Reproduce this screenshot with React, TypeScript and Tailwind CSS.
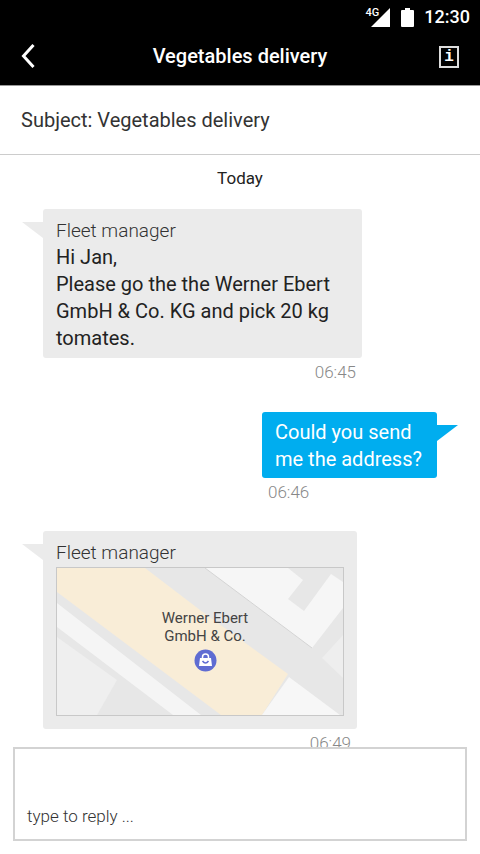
import type { ReactNode } from "react";

function StatusBar() {
  return (
    <div className="flex h-[34px] items-center justify-end pr-[10px] text-white">
      <span className="mb-2 text-[11px] leading-4 font-medium">4G</span>
      <svg className="-ml-2 h-[19px] w-[19px]" viewBox="0 0 19 19" aria-hidden="true">
        <path d="M19 0V19H0Z" fill="#fff" />
      </svg>
      <svg className="ml-[11px] h-[19px] w-[13px]" viewBox="0 0 13 19" aria-hidden="true">
        <path d="M4 0H9V2H12Q13 2 13 3V18Q13 19 12 19H1Q0 19 0 18V3Q0 2 1 2H4Z" fill="#fff" />
      </svg>
      <span className="ml-[10px] text-lg leading-6 font-medium">12:30</span>
    </div>
  );
}

function Header() {
  return (
    <header className="bg-black">
      <StatusBar />
      <div className="flex h-[51px] items-center justify-between px-[21px] pb-2 text-white">
        <button type="button" aria-label="Back" className="flex w-5 items-center">
          <svg className="h-6 w-[14px]" viewBox="0 0 14 24" aria-hidden="true">
            <path d="M12.5 1L2.5 12L12.5 23" fill="none" stroke="#fff" strokeWidth="3" />
          </svg>
        </button>
        <h1 className="text-xl leading-6 font-medium">Vegetables delivery</h1>
        <button
          type="button"
          aria-label="Information"
          className="mt-[2px] flex h-[22px] w-5 items-center justify-center border-2 border-[#ddd] font-['Liberation_Mono',monospace] text-base leading-4 font-bold"
        >
          i
        </button>
      </div>
    </header>
  );
}

type Side = "left" | "right";

function Bubble({ side, width, children }: { side: Side; width: string; children: ReactNode }) {
  const mine = side === "right";
  return (
    <div
      className={`relative rounded-[3px] px-[13px] ${width} ${
        mine ? "bg-[#00adef] pt-[7px] pb-[5px] text-white" : "bg-[#ebebeb] pt-2 pb-[6px] text-[#222]"
      }`}
    >
      <svg
        className={`absolute top-[13px] h-4 w-[21px] ${mine ? "left-full" : "right-full"}`}
        viewBox="0 0 21 16"
        aria-hidden="true"
      >
        <path d={mine ? "M0 0H21L0 16Z" : "M21 0H0L21 16Z"} fill={mine ? "#00adef" : "#ebebeb"} />
      </svg>
      {children}
    </div>
  );
}

function Time({ children }: { children: ReactNode }) {
  return <time className="px-[6px] text-[17px] leading-7 font-light text-[#888]">{children}</time>;
}

function LocationMap() {
  return (
    <div className="relative h-[149px] border border-[#c8c8c8]">
      <svg
        className="h-full w-full"
        viewBox="0 0 286 147"
        preserveAspectRatio="xMidYMid slice"
        aria-hidden="true"
      >
        <rect width="286" height="147" fill="#e7e7e7" />
        <path d="M0 69L60 112L40 147H0Z" fill="#efefef" />
        <path d="M0 35L144 147H116L0 59Z" fill="#f5f5f5" />
        <path d="M0 0H88L143 42L231 106L205 147H164L0 24Z" fill="#f9edd7" />
        <path d="M232 109L283 147H205Z" fill="#f7f7f7" />
        <path
          d="M148 0H231L246 12L231 31L247 43L274 6L286 14V40L255 80Z"
          fill="#f6f6f6"
        />
        <path d="M148 0L255 80" stroke="#d4d4d4" />
        <path d="M286 67V110L265 90Z" fill="#eeeeee" />
      </svg>
      <div className="absolute inset-x-0 top-[41px] flex flex-col items-center pl-[10px] text-center text-[15px] leading-[18px] text-[#444]">
        <p>
          Werner Ebert
          <br />
          GmbH &amp; Co.
        </p>
        <svg className="mt-1 h-[23px] w-[23px]" viewBox="0 0 23 23" aria-hidden="true">
          <circle cx="11.5" cy="11.5" r="11" fill="#5f6cd2" />
          <path d="M6 9H17L18 17H5Z" fill="#fff" />
          <path d="M8.5 9.5V8A3 3 0 0 1 14.5 8V9.5" fill="none" stroke="#fff" strokeWidth="1.5" />
          <path d="M8.5 12Q11.5 16 14.5 12" fill="none" stroke="#5f6cd2" strokeWidth="1.5" />
        </svg>
      </div>
    </div>
  );
}

function Sender() {
  return <p className="text-[19px] font-light text-[#333]">Fleet manager</p>;
}

export default function App() {
  return (
    <div className="flex h-screen flex-col overflow-hidden bg-white font-[Roboto,sans-serif] text-black">
      <Header />
      <p className="border-t border-b border-t-[#999] border-b-[#ccc] px-[21px] pt-5 pb-5 text-xl leading-7 text-[#333]">
        Subject: Vegetables delivery
      </p>
      <main className="min-h-0 flex-1 overflow-hidden px-[43px] text-xl leading-[27px]">
        <p className="pt-[9px] text-center text-[17px] leading-7 text-[#222]">Today</p>
        <div className="mt-[17px] flex w-fit flex-col items-end">
          <Bubble side="left" width="w-[319px]">
            <Sender />
            <p>Hi Jan,</p>
            <p>Please go the the Werner Ebert GmbH &amp; Co. KG and pick 20 kg tomates.</p>
          </Bubble>
          <Time>06:45</Time>
        </div>
        <div className="mt-[26px] ml-auto flex w-fit flex-col items-start">
          <Bubble side="right" width="w-[175px]">
            <p>
              Could you send
              <br />
              me the address?
            </p>
          </Bubble>
          <Time>06:46</Time>
        </div>
        <div className="mt-[25px] flex w-fit flex-col items-end">
          <Bubble side="left" width="w-[314px]">
            <Sender />
            <div className="pt-px pb-[7px]">
              <LocationMap />
            </div>
          </Bubble>
          <Time>06:49</Time>
        </div>
      </main>
      <form className="px-[13px] pb-[13px]">
        <textarea
          aria-label="Reply"
          placeholder="type to reply ..."
          className="block h-[94px] w-full resize-none border-2 border-[#d3d3d3] px-3 pt-[53px] text-[17px] leading-7 font-light outline-none placeholder:text-[#333]"
        />
      </form>
    </div>
  );
}
